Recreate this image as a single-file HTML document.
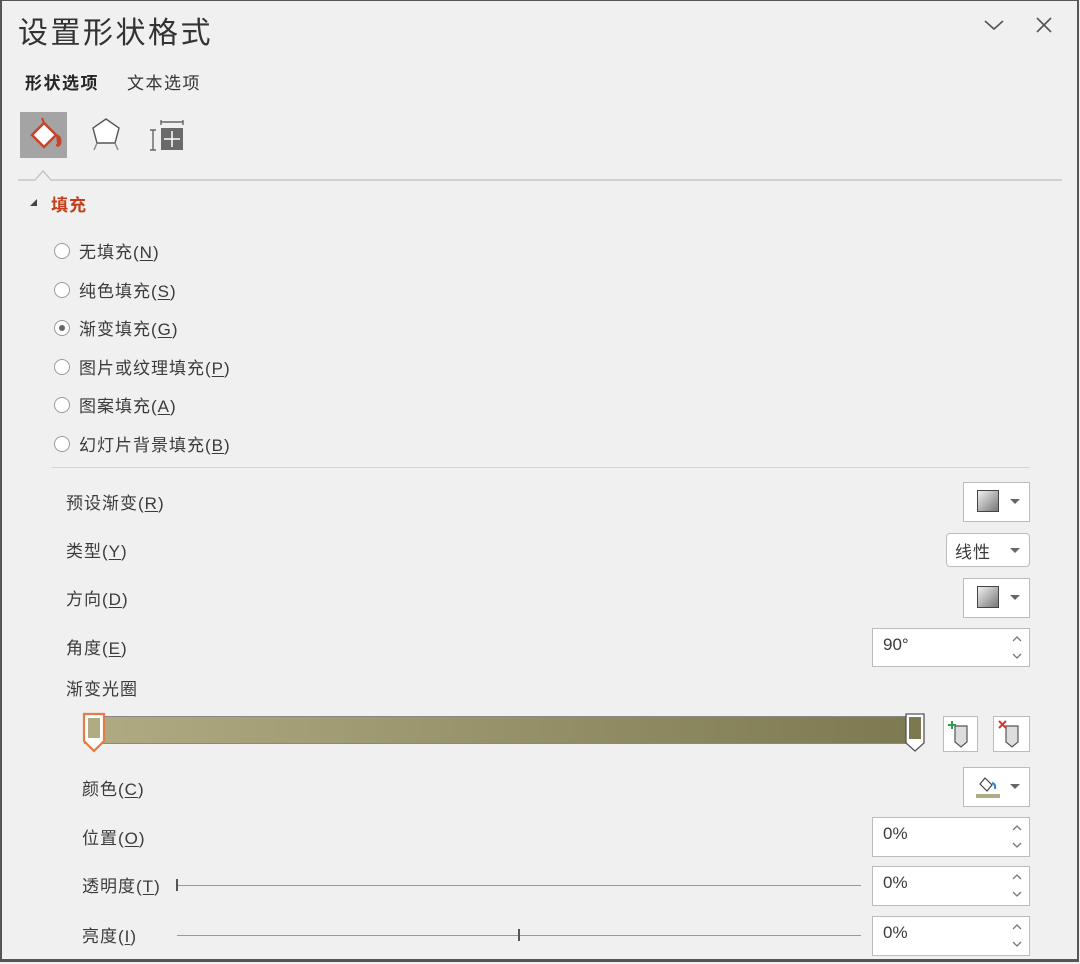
<!DOCTYPE html>
<html><head><meta charset="utf-8"><style>
*{margin:0;padding:0;box-sizing:border-box}
body{width:1080px;height:964px;background:#f0f0f0;position:relative;overflow:hidden;font-family:"Liberation Sans","Noto Sans CJK SC",sans-serif;color:#3b3b3b}
.frame{position:absolute;left:0;top:0;width:1079px;height:962px;border:2px solid #555;border-top-width:1px;border-bottom-width:3px}
.a{position:absolute;white-space:nowrap}
.t{font-size:17px;letter-spacing:1px}
.u{text-decoration:underline;text-underline-offset:2px}
.radio{position:absolute;width:16px;height:16px;border:1px solid #9a9a9a;border-radius:50%;background:#fff}
.btn{position:absolute;background:#fff;border:1px solid #bcbcbc}
.inp{position:absolute;background:#fff;border:1px solid #bcbcbc;font-size:17px;padding:6px 0 0 10px}
.spin{position:absolute;font-size:13px;color:#777}
.dd{position:absolute;width:0;height:0;border-left:5px solid transparent;border-right:5px solid transparent;border-top:5px solid #666}
.grad{position:absolute;width:22px;height:22px;border:1px solid #444;background:linear-gradient(135deg,#f0f0f0,#777)}
</style></head><body>
<div class="frame"></div>
<div class="a" style="left:18px;top:8px;font-size:30px;letter-spacing:2.5px;color:#333">设置形状格式</div>
<svg class="a" style="left:983px;top:18px" width="22" height="14"><path d="M2 3 L11 11 L20 3" stroke="#555" stroke-width="1.6" fill="none"/></svg>
<svg class="a" style="left:1036px;top:17px" width="16" height="16"><path d="M1 1 L15 15 M15 1 L1 15" stroke="#555" stroke-width="1.6"/></svg>
<div class="a" style="left:25px;top:69px;font-size:17px;letter-spacing:1.5px;font-weight:bold;color:#262626">形状选项</div>
<div class="a" style="left:127px;top:69px;font-size:17px;letter-spacing:1.5px;color:#333">文本选项</div>
<div class="a" style="left:20px;top:112px;width:47px;height:46px;background:#a4a4a4"></div>
<svg class="a" style="left:20px;top:112px" width="47" height="46"><path d="M24 11 L36 23 L24 35 L12 23 Z" fill="#fff" stroke="#c9432a" stroke-width="2.5"/><path d="M24 11 L22 6" stroke="#c9432a" stroke-width="2"/><path d="M36 23 Q42 25 40 32 Q37 36 37 32" fill="#c9432a" stroke="#c9432a" stroke-width="2"/></svg>
<svg class="a" style="left:88px;top:114px" width="36" height="40"><path d="M18 5 L31 14 L27 29 L9 29 L5 14 Z" fill="#fff" stroke="#555" stroke-width="1.4"/><path d="M9 29 L6 36 M27 29 L30 36" stroke="#888" stroke-width="1.4"/></svg>
<svg class="a" style="left:148px;top:116px" width="40" height="38"><path d="M5 14 V34 M2 14 H8 M2 34 H8 M13 4 V9 M35 4 V9 M13 6 H35" stroke="#666" stroke-width="1.4" fill="none"/><rect x="13" y="12" width="22" height="22" fill="#6a6a6a"/><path d="M24 15 V31 M16 23 H32" stroke="#fff" stroke-width="1.5"/></svg>
<svg class="a" style="left:18px;top:168px" width="1044" height="16"><path d="M0 12 H17 L25 3 L33 12 H1044" stroke="#c6c6c6" stroke-width="1.5" fill="none"/></svg>
<div class="a" style="left:30px;top:199px;width:0;height:0;border-left:7px solid transparent;border-bottom:7px solid #444"></div>
<div class="a" style="left:51px;top:191px;font-size:17px;letter-spacing:1px;font-weight:bold;color:#c43e1c">填充</div>

<div class="radio" style="left:54px;top:243px"></div><div class="a t" style="left:79px;top:238px">无填充(<span class="u">N</span>)</div>
<div class="radio" style="left:54px;top:282px"></div><div class="a t" style="left:79px;top:277px">纯色填充(<span class="u">S</span>)</div>
<div class="radio" style="left:54px;top:320px"></div><div class="a" style="left:59px;top:325px;width:6px;height:6px;border-radius:50%;background:#666"></div><div class="a t" style="left:79px;top:315px">渐变填充(<span class="u">G</span>)</div>
<div class="radio" style="left:54px;top:359px"></div><div class="a t" style="left:79px;top:354px">图片或纹理填充(<span class="u">P</span>)</div>
<div class="radio" style="left:54px;top:397px"></div><div class="a t" style="left:79px;top:392px">图案填充(<span class="u">A</span>)</div>
<div class="radio" style="left:54px;top:436px"></div><div class="a t" style="left:79px;top:431px">幻灯片背景填充(<span class="u">B</span>)</div>
<div class="a" style="left:52px;top:467px;width:978px;height:1px;background:#d4d4d4"></div>

<div class="a t" style="left:66px;top:489px">预设渐变(<span class="u">R</span>)</div>
<div class="a t" style="left:66px;top:537px">类型(<span class="u">Y</span>)</div>
<div class="a t" style="left:66px;top:585px">方向(<span class="u">D</span>)</div>
<div class="a t" style="left:66px;top:634px">角度(<span class="u">E</span>)</div>
<div class="a t" style="left:66px;top:675px">渐变光圈</div>

<div class="btn" style="left:963px;top:482px;width:67px;height:40px"></div><div class="grad" style="left:977px;top:490px"></div><div class="dd" style="left:1010px;top:499px"></div>
<div class="btn" style="left:946px;top:533px;width:84px;height:34px;border-radius:4px"></div><div class="a t" style="left:955px;top:538px">线性</div><div class="dd" style="left:1010px;top:548px"></div>
<div class="btn" style="left:963px;top:578px;width:67px;height:40px"></div><div class="grad" style="left:977px;top:586px"></div><div class="dd" style="left:1010px;top:595px"></div>
<div class="inp" style="left:872px;top:628px;width:158px;height:39px">90°</div>
<svg class="a" style="left:1010px;top:634px" width="14" height="28"><path d="M3 7 L7 3 L11 7 M3 20 L7 24 L11 20" stroke="#777" stroke-width="1.3" fill="none"/></svg>

<div class="a" style="left:84px;top:716px;width:840px;height:28px;border:1px solid #888;background:linear-gradient(90deg,#b0ab82,#7c7850)"></div>
<svg class="a" style="left:80px;top:711px" width="30" height="44"><path d="M4 3 H24 V30 L14 40 L4 30 Z" fill="#fff" stroke="#e87a45" stroke-width="2.2"/><rect x="8" y="7" width="12" height="20" fill="#b0ab82"/></svg>
<svg class="a" style="left:904px;top:711px" width="24" height="44"><path d="M2 3 H20 V32 L11 40 L2 32 Z" fill="#fff" stroke="#555" stroke-width="1.3"/><rect x="5" y="6" width="12" height="22" fill="#7c7850"/></svg>
<div class="btn" style="left:943px;top:716px;width:35px;height:36px"></div>
<svg class="a" style="left:943px;top:716px" width="35" height="36"><path d="M12 10 H24 V26 L18 31 L12 26 Z" fill="#ddd" stroke="#555" stroke-width="1.2"/><path d="M9 5 V13 M5 9 H13" stroke="#2aa04a" stroke-width="2"/></svg>
<div class="btn" style="left:993px;top:716px;width:37px;height:36px"></div>
<svg class="a" style="left:993px;top:716px" width="37" height="36"><path d="M13 10 H25 V26 L19 31 L13 26 Z" fill="#ddd" stroke="#555" stroke-width="1.2"/><path d="M6 5 L13 12 M13 5 L6 12" stroke="#e03030" stroke-width="2"/></svg>

<div class="a t" style="left:82px;top:775px">颜色(<span class="u">C</span>)</div>
<div class="a t" style="left:82px;top:824px">位置(<span class="u">O</span>)</div>
<div class="a t" style="left:82px;top:872px">透明度(<span class="u">T</span>)</div>
<div class="a t" style="left:82px;top:922px">亮度(<span class="u">I</span>)</div>

<div class="btn" style="left:963px;top:767px;width:67px;height:40px"></div>
<svg class="a" style="left:974px;top:772px" width="30" height="30"><path d="M6 12 L11 6 L18 13 L13 19 Z" fill="#fff" stroke="#444" stroke-width="1.2"/><path d="M18 11 Q22 12 21 17" stroke="#2f86c8" stroke-width="2" fill="none"/><rect x="2" y="22" width="24" height="4" fill="#b0ab82"/></svg>
<div class="dd" style="left:1010px;top:784px"></div>
<div class="inp" style="left:872px;top:817px;width:158px;height:40px">0%</div>
<svg class="a" style="left:1010px;top:823px" width="14" height="28"><path d="M3 7 L7 3 L11 7 M3 20 L7 24 L11 20" stroke="#777" stroke-width="1.3" fill="none"/></svg>
<div class="inp" style="left:872px;top:866px;width:158px;height:40px">0%</div>
<svg class="a" style="left:1010px;top:872px" width="14" height="28"><path d="M3 7 L7 3 L11 7 M3 20 L7 24 L11 20" stroke="#777" stroke-width="1.3" fill="none"/></svg>
<div class="inp" style="left:872px;top:916px;width:158px;height:40px">0%</div>
<svg class="a" style="left:1010px;top:922px" width="14" height="28"><path d="M3 7 L7 3 L11 7 M3 20 L7 24 L11 20" stroke="#777" stroke-width="1.3" fill="none"/></svg>
<div class="a" style="left:177px;top:885px;width:684px;height:1px;background:#999"></div><div class="a" style="left:176px;top:879px;width:2px;height:12px;background:#555"></div>
<div class="a" style="left:177px;top:935px;width:684px;height:1px;background:#999"></div><div class="a" style="left:518px;top:929px;width:2px;height:12px;background:#555"></div>
</body></html>
